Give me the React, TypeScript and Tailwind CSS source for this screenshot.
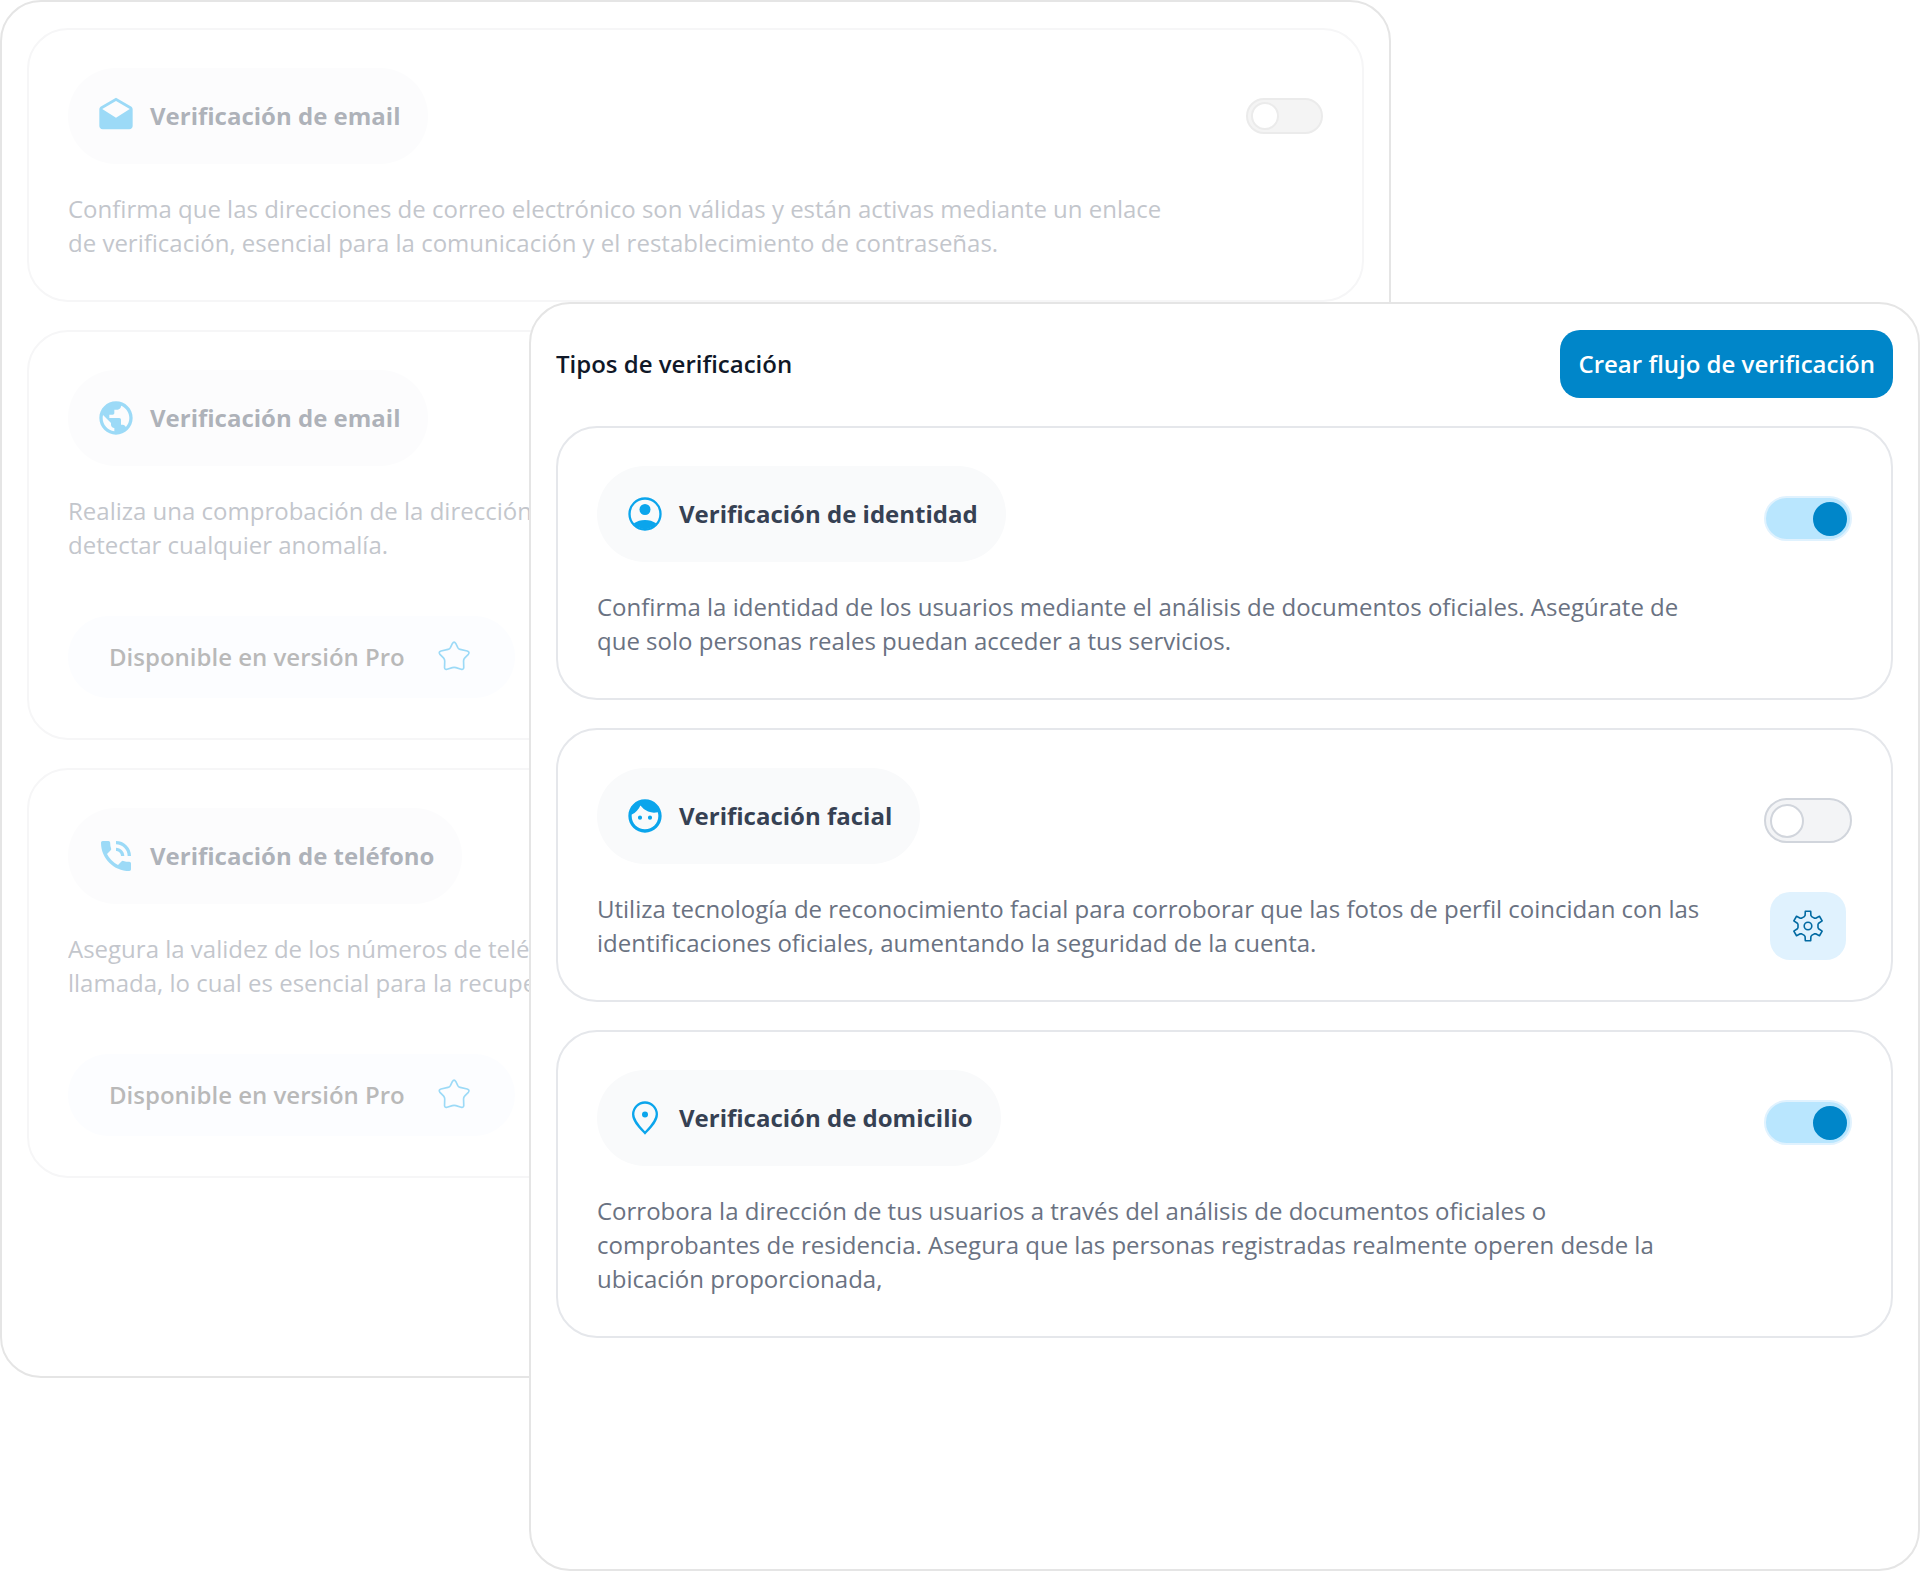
import { useId, type ReactNode } from "react";
import { MdDrafts, MdFace, MdPhoneInTalk, MdPublic } from "react-icons/md";

type Card = {
  icon: ReactNode;
  title: string;
  text: string;
  enabled?: boolean;
  pro?: boolean;
  settings?: boolean;
};

function UserCircleIcon() {
  return (
    <svg viewBox="0 0 24 24" className="size-10" aria-hidden="true">
      <circle cx="12" cy="12" r="9.3" fill="none" stroke="currentColor" strokeWidth="1.4" />
      <circle cx="12" cy="9.3" r="3.3" fill="currentColor" />
      <path d="M5.3 17.6C7.2 16.3 9.5 15.6 12 15.6s4.8.7 6.7 2L17.500 19.500 12 21.500 6.500 19.500Z" fill="currentColor" />
    </svg>
  );
}

function PinIcon() {
  return (
    <svg viewBox="0 0 24 24" className="size-10" aria-hidden="true">
      <path
        d="M12 21C9 17.8 4.9 14 4.9 9.8a7.1 7.1 0 0 1 14.2 0C19.1 14 15 17.8 12 21Z"
        fill="none"
        stroke="currentColor"
        strokeWidth="1.4"
      />
      <circle cx="12" cy="9.9" r="1.8" fill="currentColor" />
    </svg>
  );
}

function StarIcon() {
  return (
    <svg viewBox="0 0 41 41" className="size-10" aria-hidden="true">
      <path
        d="M18.9 6.6Q20.6 4 22.3 6.6L24.4 10.8Q25.2 12.3 26.8 12.7L34 14.4Q37 15.4 35.2 17.8L31.6 21.4Q30.2 22.9 30.3 24.6L30.5 31.3Q30.2 33.8 27.8 33L22.5 31.4Q20.6 30.9 18.8 31.4L13.4 33Q11 33.8 10.8 31.3L11 24.6Q11 22.9 9.7 21.4L6.1 17.8Q4.2 15.4 7.2 14.4L14.4 12.7Q16 12.3 16.8 10.8Z"
        fill="none"
        stroke="currentColor"
        strokeWidth="1.7"
        strokeLinejoin="round"
      />
    </svg>
  );
}

function gearOutline() {
  const tooth = [
    [-3.7, -9.4],
    [-2.9, -10.6],
    [-2.7, -14.8],
    [2.7, -14.8],
    [2.9, -10.6],
    [3.7, -9.4],
  ];
  const points: string[] = [];
  for (let i = 0; i < 6; i++) {
    const a = (i * Math.PI) / 3;
    for (const [x, y] of tooth) {
      const px = 20 + x * Math.cos(a) - y * Math.sin(a);
      const py = 20 + x * Math.sin(a) + y * Math.cos(a);
      points.push(`${px.toFixed(2)},${py.toFixed(2)}`);
    }
  }
  return points.join(" ");
}

function GearIcon() {
  return (
    <svg viewBox="0 0 40 40" className="size-10" aria-hidden="true" fill="none" stroke="currentColor" strokeWidth="1.6">
      <polygon points={gearOutline()} strokeLinejoin="round" />
      <circle cx="20" cy="20" r="3.8" />
    </svg>
  );
}

const backCards: Card[] = [
  {
    icon: <MdDrafts className="size-10" />,
    title: "Verificación de email",
    text: "Confirma que las direcciones de correo electrónico son válidas y están activas mediante un enlace de verificación, esencial para la comunicación y el restablecimiento de contraseñas.",
    enabled: false,
  },
  {
    icon: <MdPublic className="size-10" />,
    title: "Verificación de email",
    text: "Realiza una comprobación de la dirección\ndetectar cualquier anomalía.",
    pro: true,
  },
  {
    icon: <MdPhoneInTalk className="size-10" />,
    title: "Verificación de teléfono",
    text: "Asegura la validez de los números de teléfono\nllamada, lo cual es esencial para la recuperación",
    pro: true,
  },
];

const frontCards: Card[] = [
  {
    icon: <UserCircleIcon />,
    title: "Verificación de identidad",
    text: "Confirma la identidad de los usuarios mediante el análisis de documentos oficiales. Asegúrate de que solo personas reales puedan acceder a tus servicios.",
    enabled: true,
  },
  {
    icon: <MdFace className="size-10" />,
    title: "Verificación facial",
    text: "Utiliza tecnología de reconocimiento facial para corroborar que las fotos de perfil coincidan con las identificaciones oficiales, aumentando la seguridad de la cuenta.",
    enabled: false,
    settings: true,
  },
  {
    icon: <PinIcon />,
    title: "Verificación de domicilio",
    text: "Corrobora la dirección de tus usuarios a través del análisis de documentos oficiales o comprobantes de residencia. Asegura que las personas registradas realmente operen desde la ubicación proporcionada,",
    enabled: true,
  },
];

function CardBody({ card, titleId, muted }: { card: Card; titleId: string; muted?: boolean }) {
  return (
    <div className={`flex min-w-0 flex-1 flex-col items-start ${muted ? "opacity-40" : ""}`}>
      <div className="flex items-center gap-3.5 rounded-full bg-[#f9fafb] p-7">
        <span className="text-[#0ba5ec]">{card.icon}</span>
        <h3 id={titleId} className="text-2xl leading-10 font-bold text-gray-700">
          {card.title}
        </h3>
      </div>
      <p className="mt-7 text-2xl leading-[34px] whitespace-pre-line text-gray-500">{card.text}</p>
      {card.pro && (
        <div className="mt-[54px] flex items-center gap-[29px] rounded-full bg-[#f8fbff] px-[41px] py-[21px]">
          <span className="text-2xl leading-10 font-semibold text-neutral-600">Disponible en versión Pro</span>
          <span className="text-[#0ba5ec]">
            <StarIcon />
          </span>
        </div>
      )}
    </div>
  );
}

function BackCard({ card }: { card: Card }) {
  const id = useId();
  return (
    <article className="flex gap-14 rounded-[41px] border-2 border-[#f6f6f7] px-[39px] pt-[38px] pb-10">
      <CardBody card={card} titleId={id} muted />
      {card.enabled !== undefined && (
        <input
          type="checkbox"
          role="switch"
          aria-labelledby={id}
          defaultChecked={card.enabled}
          className="mt-[30px] flex h-9 w-[77px] shrink-0 appearance-none items-center rounded-full border-2 border-[#ebebeb] bg-[#f4f4f4] px-[3px] before:size-7 before:rounded-full before:border-2 before:border-[#ebebeb] before:bg-white checked:justify-end"
        />
      )}
    </article>
  );
}

function FrontCard({ card }: { card: Card }) {
  const id = useId();
  return (
    <article className="flex gap-14 rounded-[41px] border-2 border-gray-200 px-[39px] pt-[38px] pb-10">
      <CardBody card={card} titleId={id} />
      <div className="flex shrink-0 flex-col items-center gap-[49px] pt-[30px]">
        <input
          type="checkbox"
          role="switch"
          aria-labelledby={id}
          defaultChecked={card.enabled}
          className="flex h-[45px] w-[88px] appearance-none items-center rounded-full border-2 border-gray-300 bg-gray-100 px-1 before:size-[34px] before:rounded-full before:border-2 before:border-gray-300 before:bg-white checked:justify-end checked:border-[#e0f2fe] checked:bg-[#b9e6fe] checked:px-[3px] checked:before:border-[#0086c9] checked:before:bg-[#0086c9]"
        />
        {card.settings && (
          <button
            type="button"
            aria-label="Configurar"
            className="flex items-center justify-center rounded-[20px] bg-[#e0f2fe] px-[18px] py-3.5 text-[#026aa2]"
          >
            <GearIcon />
          </button>
        )}
      </div>
    </article>
  );
}

export default function App() {
  return (
    <main className="grid grid-cols-[minmax(0,529fr)_minmax(0,862fr)_minmax(0,529fr)] items-start bg-white font-['Open_Sans',sans-serif]">
      <section className="col-start-1 col-end-3 row-start-1 flex flex-col gap-7 rounded-[41px] border-2 border-[#e5e5e5] px-[25px] pt-[26px] pb-[198px]">
        {backCards.map((card, i) => (
          <BackCard key={i} card={card} />
        ))}
      </section>

      <section className="z-10 col-start-2 col-end-4 row-start-1 mt-[302px] flex flex-col gap-7 rounded-[41px] border-2 border-[#e5e5e5] bg-white px-[25px] pt-[26px] pb-[231px]">
        <header className="flex items-center justify-between">
          <h2 className="text-2xl leading-[34px] font-semibold text-gray-900">Tipos de verificación</h2>
          <button
            type="button"
            className="rounded-[20px] bg-[#0086c9] px-[18px] py-[17px] text-2xl leading-[34px] font-semibold text-white"
          >
            Crear flujo de verificación
          </button>
        </header>
        {frontCards.map((card, i) => (
          <FrontCard key={i} card={card} />
        ))}
      </section>
    </main>
  );
}
